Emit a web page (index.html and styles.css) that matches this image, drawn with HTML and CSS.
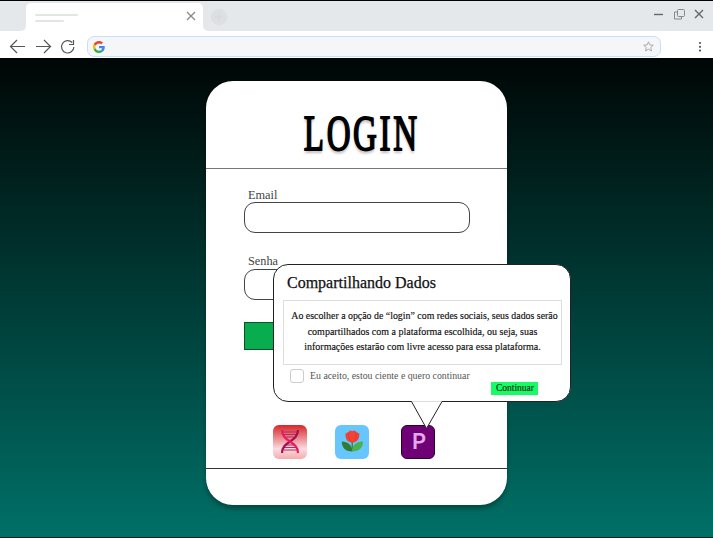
FILE: index.html
```html
<!DOCTYPE html>
<html lang="pt-BR">
<head>
<meta charset="utf-8">
<title>Login</title>
<link rel="stylesheet" href="styles.css">
</head>
<body>
<div class="browser">
  <header class="chrome">
    <div class="tabs">
      <div class="before-tab"></div>
      <div class="tab">
        <div class="tab-title"><i></i><i></i></div>
        <svg width="10" height="10" viewBox="0 0 10 10"><path d="M1 1l8 8M9 1L1 9" stroke="#888" stroke-width="1.3"/></svg>
      </div>
      <div class="after-tab">
        <svg class="new-tab" width="18" height="18" viewBox="0 0 18 18"><circle cx="9" cy="9" r="8.3" fill="#dedfe2"/><path d="M9 5v8M5 9h8" stroke="#d5d7da"/></svg>
        <svg class="window-icons" width="52" height="14" viewBox="0 0 52 14" fill="none" stroke="#666">
          <path d="M1 7.500h9" stroke-width="1.4"/>
          <g stroke="#888"><rect x="24.500" y="2.500" width="7" height="7" rx="1"/><path d="M24 5h-2.500v7h7v-2"/></g>
          <path d="M42 3l8 8M50 3l-8 8" stroke-width="1.4"/>
        </svg>
      </div>
    </div>
    <div class="toolbar">
      <svg class="nav" width="70" height="18" viewBox="0 0 70 18" fill="none" stroke="#555" stroke-width="1.200">
        <path d="M16 9.500H2M8 3L1.500 9.500 8 16M27 9.500h14M35 3l6.500 6.500L35 16"/>
        <path d="M63.200 5.500a6.200 6.200 0 1 0 1.700 4.500M64.500 3v4.500h-4.500"/>
      </svg>
      <div class="address">
        <svg width="12" height="12" viewBox="0 0 48 48"><path fill="#ea4335" d="M24 9.500c3.500 0 6.700 1.200 9.200 3.600l6.900-6.900C35.900 2.400 30.500 0 24 0 14.600 0 6.500 5.400 2.600 13.200l8 6.200C12.400 13.700 17.700 9.500 24 9.500z"/><path fill="#4285f4" d="M47 24.500c0-1.600-.2-3.100-.4-4.500H24v9h12.900c-.6 3-2.300 5.500-4.800 7.200l7.700 6C44.400 38 47 31.800 47 24.500z"/><path fill="#fbbc05" d="M10.500 28.600a14.500 14.500 0 0 1 0-9.200l-8-6.200a24 24 0 0 0 0 21.600z"/><path fill="#34a853" d="M24 48c6.500 0 11.900-2.100 15.900-5.800l-7.700-6c-2.200 1.500-4.900 2.300-8.200 2.300-6.300 0-11.600-4.200-13.500-9.900l-8 6.200C6.500 42.600 14.600 48 24 48z"/></svg>
        <svg width="11" height="11" viewBox="0 0 11 11"><path d="M5.500.8l1.300 3.100 3.500.3-2.600 2.300.8 3.500-3-1.800-3 1.800.8-3.500L.7 4.200l3.500-.3z" fill="none" stroke="#aaa"/></svg>
      </div>
      <svg class="more" width="4" height="12" viewBox="0 0 4 12" fill="#555"><circle cx="2" cy="2" r="1.100"/><circle cx="2" cy="5.800" r="1.100"/><circle cx="2" cy="9.600" r="1.100"/></svg>
    </div>
  </header>
  <main class="page">
    <section class="card">
      <div class="card-head"><h1>LOGIN</h1></div>
      <form class="card-body">
        <label><span class="label">Email</span></label>
        <div class="field"></div>
        <label><span class="label">Senha</span></label>
        <div class="field second"></div>
        <div class="submit"></div>
        <div class="social">
          <div class="app dna">
            <svg width="34" height="34" viewBox="0 0 34 34" fill="none">
              <path d="M10 7h14M11 9.500h12M13 12h8M13 20h8M11 22.500h12M10 25h14" stroke="#b52a63"/>
              <path d="M25 5c0 12-16 11-16 23" stroke="#a80d4e" stroke-width="2.200"/><path d="M9 5c0 12 16 11 16 23" stroke="#e81b62" stroke-width="2.200"/>
            </svg>
          </div>
          <div class="app flower">
            <svg width="34" height="34" viewBox="0 0 34 34">
              <path d="M16.500 15h1.500v11h-1.500z" fill="#388e3c"/>
              <path d="M17.300 26.500c-6 0-10.500-3-10.500-10 6 0 10.500 4 10.500 10z" fill="#2e7d32"/><path d="M17 26.500c6 0 11-3 11-10-7 0-11 4-11 10z" fill="#4caf50"/>
              <path d="M10.500 8.500l3-1.500 1.500-1.500 2.300.5 2.500-.5 1.500 1.500 3 1.500c.5 5-2 9-7 9s-7.300-4-6.800-9z" fill="#f44336"/><path d="M14 7.500c-1 4 0 8 3.300 10 3.500-2 4.300-6 3.200-10" fill="none" stroke="#d9342b" stroke-width=".7"/>
            </svg>
          </div>
          <div class="app letter">P</div>
        </div>
      </form>
      <div class="card-foot"></div>
    </section>
    <aside class="popover">
      <h2>Compartilhando Dados</h2>
      <div class="message">
        <p class="m1">Ao escolher a opção de “login” com redes sociais, seus dados serão</p>
        <p>compartilhados com a plataforma escolhida, ou seja, suas</p>
        <p>informações estarão com livre acesso para essa plataforma.</p>
      </div>
      <div class="consent"><i></i><span>Eu aceito, estou ciente e quero continuar</span></div>
      <div class="continue"><span>Continuar</span></div>
      <svg class="tail" width="34" height="30" viewBox="0 0 34 30"><path d="M1.500 .5L16.500 27.500 32 .5" fill="#fff" stroke="#222"/><path d="M2 .5h29.500" stroke="#ddd"/></svg>
    </aside>
  </main>
</div>
</body>
</html>
```
FILE: styles.css
```css
* { box-sizing: border-box; }
body { margin: 0; overflow: hidden; }
h1, h2, p { margin: 0; font-weight: normal; }
svg { display: block; flex: none; }
.browser { position: relative; height: 538px; display: flex; flex-direction: column; border-top: 1px solid #000; border-bottom: 1px solid #00201e; }
.chrome { height: 57px; background: #fff; }
.tabs { display: flex; height: 30px; }
.before-tab { width: 26px; background: #e5e8eb; border-bottom-right-radius: 5px; }
.tab { width: 177px; margin-top: 2px; padding: 0 7px 2px 9px; display: flex; align-items: center; justify-content: space-between; background: #fff; border-radius: 5px 5px 0 0; box-shadow: 0 -4px 0 4px #e5e8eb; clip-path: inset(-2px 0 0 0); }
.tab-title { display: grid; gap: 4px; padding-top: 4px; }
.tab-title i { width: 43px; height: 2px; background: #e1e6e5; border-radius: 1px; }
.tab-title i + i { width: 29px; }
.after-tab { flex: 1; display: flex; justify-content: space-between; align-items: center; padding: 1px 8px 0 7px; background: #e5e8eb; border-bottom-left-radius: 5px; }
.window-icons { margin-bottom: 5px; }
.toolbar { display: flex; height: 27px; padding: 5px 11px 0 9px; }
.nav { margin-top: 1px; }
.address { width: 574px; height: 21px; margin-left: 8px; padding: 0 6px 0 5px; display: flex; align-items: center; justify-content: space-between; background: #f5f6f8; border: 1.5px solid #c9defa; border-radius: 7px; }
.more { margin: 5px 0 0 auto; }
.page { flex: 1; padding-top: 23px; background: linear-gradient(#000605, #007067); }
.card { width: 301px; height: 424px; margin: 0 auto; display: flex; flex-direction: column; background: #fff; border-radius: 27px; box-shadow: 0 4px 4px rgba(0,0,0,.28); }
.card-head { height: 88px; padding-top: 24px; border-bottom: 1px solid #777; display: flex; justify-content: center; }
.card h1 { font: 50px/56px "Liberation Serif", serif; letter-spacing: 4px; color: #000; white-space: nowrap; transform: translateX(5px) scaleX(.66); -webkit-text-stroke: 1.8px #000; text-shadow: 0 3px 3px rgba(0,0,0,.28); }
.card-body { height: 300px; padding: 16px 37px 0; border-bottom: 1px solid #333; }
.card-body label { display: block; height: 17px; padding-left: 5px; }
.label { display: inline-block; transform-origin: 0 50%; transform: scaleX(.91); font: 13.5px/17px "Liberation Serif", serif; color: #444; }
.field { width: 226px; height: 31px; margin-bottom: 18px; margin-left: 1px; border: 1px solid #444; border-radius: 11px; }
.second { margin-top: 1px; margin-bottom: 22px; }
.submit { width: 226px; height: 28px; margin-left: 1px; background: #08ad4d; border: 1px solid #154d2b; }
.social { display: flex; margin: 75px 0 0 30px; }
.app { width: 34px; height: 34px; border-radius: 6px; overflow: hidden; }
.dna { background: linear-gradient(#d8262b, #f9dce0 70%, #f4abad); }
.flower { margin-left: 28px; background: #67c6fc; }
.letter { margin-left: 32px; background: #700076; border: 1px solid #24002a; color: #e3a9eb; font: 600 22px/31px Inter, sans-serif; text-align: center; padding-left: 2px; }
.popover { position: absolute; left: 273px; top: 263px; width: 298px; height: 138px; background: #fff; border: 1px solid #222; border-radius: 15px; }
.popover h2 { height: 35px; padding-left: 13px; font: 16px/36px "Liberation Serif", serif; color: #111; -webkit-text-stroke: .25px #111; }
.popover span, .message p { white-space: nowrap; }
.message { width: 279px; height: 65px; margin-left: 9px; padding-top: 7px; border: 1px solid #ddd; font: 10px/15.500px "Liberation Serif", serif; color: #111; -webkit-text-stroke: .15px #111; display: flex; flex-direction: column; align-items: center; }
.message .m1 { transform: translateX(1.5px) scaleX(.987); }
.consent { display: flex; align-items: center; height: 22px; margin-left: 16px; font: 10px/22px "Liberation Serif", serif; color: #555; }
.consent span { transform: scaleX(.983); transform-origin: 0 50%; }
.consent i { width: 14px; height: 14px; border: 1px solid #ccc; border-radius: 3px; margin-right: 6px; }
.continue { width: 47px; height: 13px; margin: -5px 0 0 217px; padding-left: 5px; background: #17fb66; font: 9.500px/13px "Liberation Serif", serif; color: #063d1b; -webkit-text-stroke: .2px #063d1b; }
.tail { position: absolute; left: 136px; top: 136px; }
```
